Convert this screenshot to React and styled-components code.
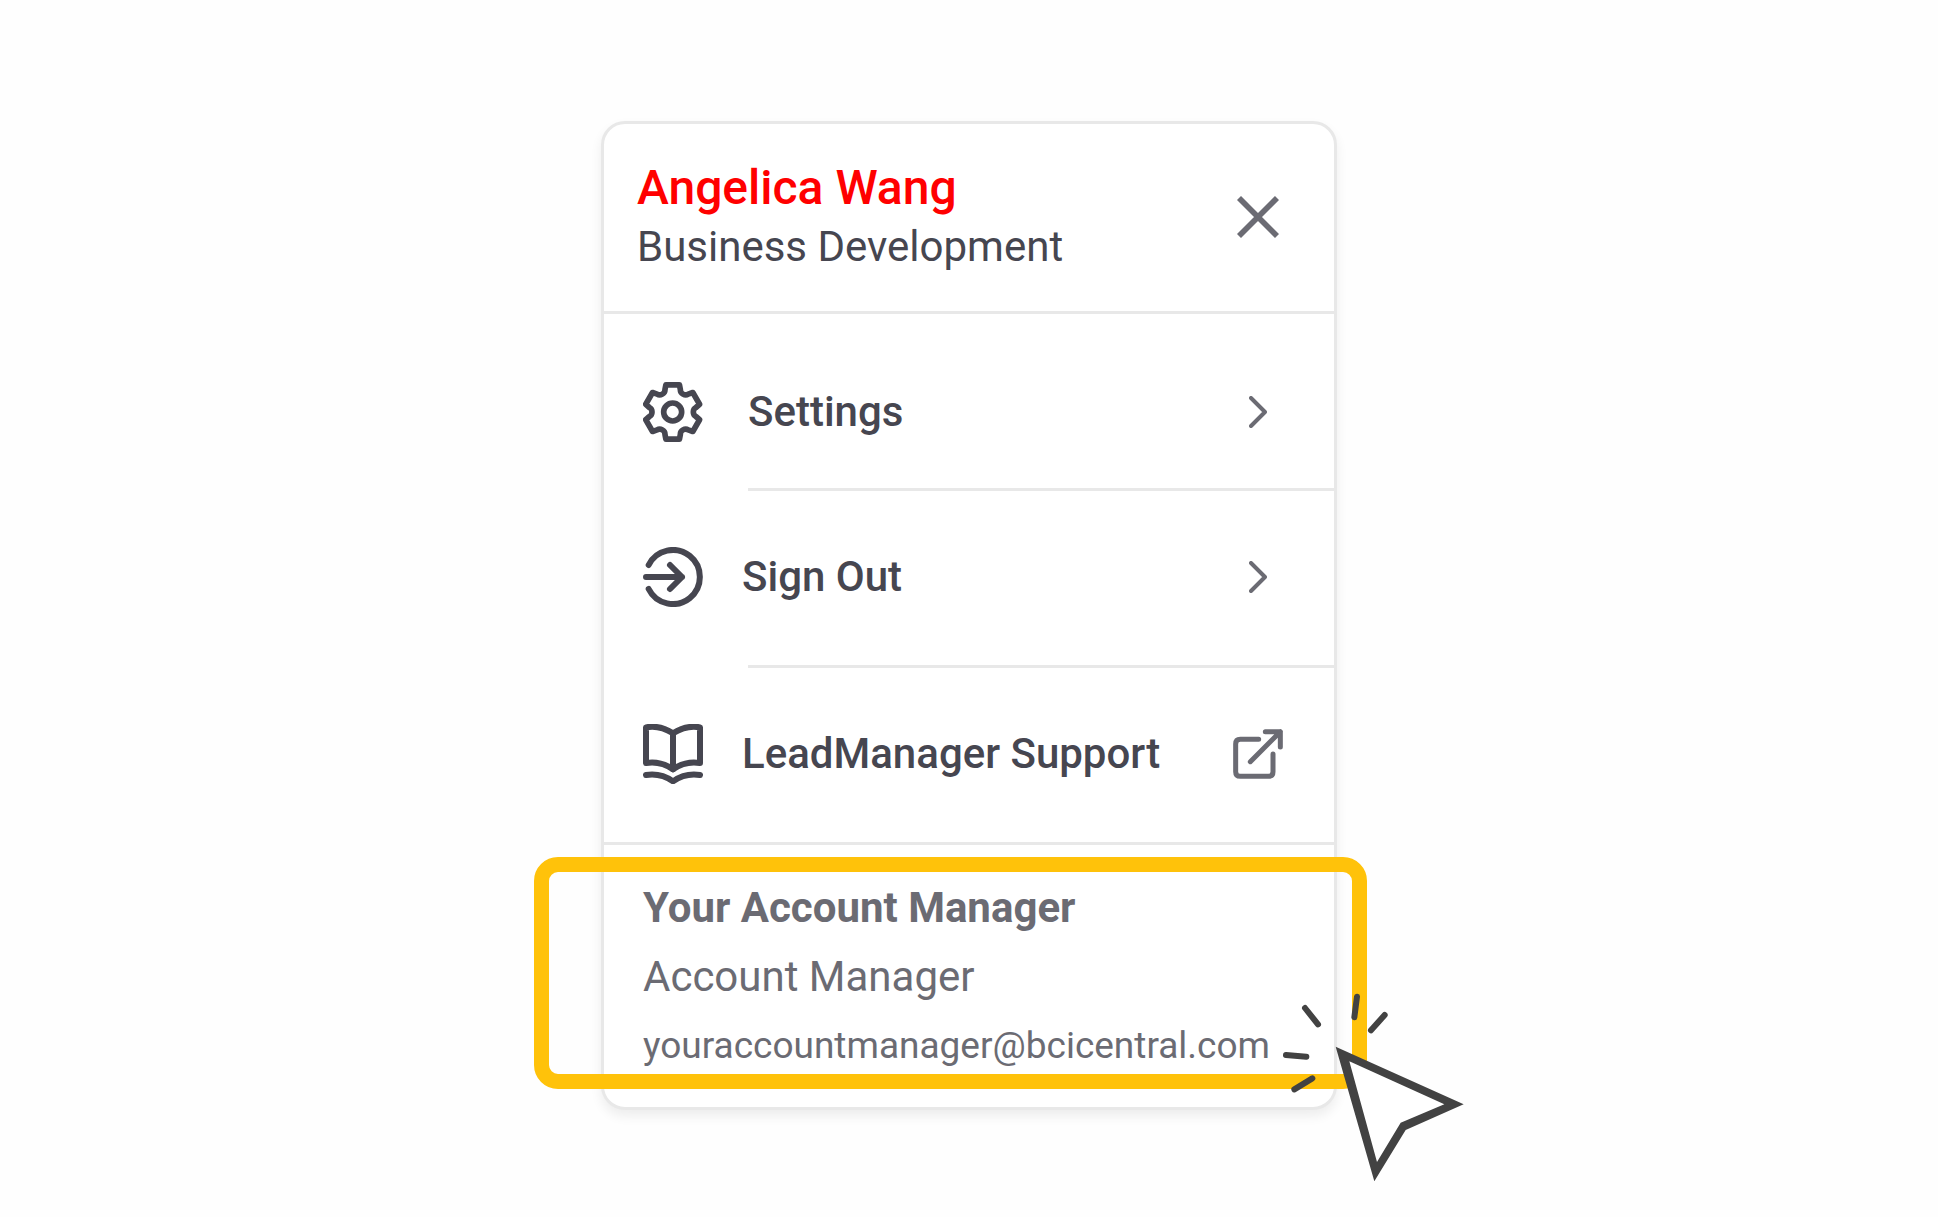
import React from "react";
import styled, { createGlobalStyle } from "styled-components";

const ink = "#464650";
const muted = "#6b6b73";
const line = "#e8e8e8";
const amber = "#ffc20a";

const GlobalStyle = createGlobalStyle`
  *, *::before, *::after { box-sizing: border-box; }
  body {
    margin: 0;
    background: #fefefe;
    color: ${ink};
    font-family: Roboto, "Liberation Sans", sans-serif;
  }
`;

const Page = styled.main`
  display: flex;
  justify-content: center;
  align-items: flex-start;
  min-height: 100vh;
  padding: 121px 24px 96px;
`;

const Card = styled.section`
  width: 100%;
  max-width: 736px;
  background: #fff;
  border: 3px solid ${line};
  border-radius: 24px;
  box-shadow: 0 6px 12px rgba(0, 0, 0, 0.07);
`;

const Header = styled.header`
  display: flex;
  align-items: center;
  justify-content: space-between;
  min-height: 187px;
  padding: 0 51px 1px 33px;
`;

const Name = styled.h1`
  margin: 0;
  font-size: 48px;
  line-height: 60px;
  font-weight: 500;
  color: #f00;
`;

const Role = styled.p`
  margin: 0;
  font-size: 42px;
  line-height: 58px;
`;

const Trailing = styled.span`
  display: flex;
  justify-content: center;
  flex: none;
  width: 50px;
  margin-left: auto;
  color: ${muted};
`;

const CloseButton = styled.button`
  display: flex;
  justify-content: center;
  flex: none;
  width: 50px;
  padding: 0;
  border: 0;
  background: none;
  color: ${muted};
  cursor: pointer;
`;

const Divider = styled.hr`
  height: 3px;
  margin: 0 0 0 ${(p) => (p.$inset ? "144px" : "0")};
  border: 0;
  background: ${line};
`;

const Row = styled.a`
  display: flex;
  align-items: center;
  gap: ${(p) => (p.$wide ? "45px" : "39px")};
  width: 100%;
  height: 174px;
  padding: ${(p) => (p.$wide ? "22px 51px 0 39px" : "0 51px 2px 39px")};
  border: 0;
  background: none;
  color: inherit;
  font: 500 42px/58px Roboto, "Liberation Sans", sans-serif;
  text-align: left;
  text-decoration: none;
  cursor: pointer;
`;

const Icon = styled.svg`
  display: block;
  flex: none;
  width: ${(p) => p.$w}px;
  height: ${(p) => p.$h || p.$w}px;
  fill: none;
  stroke: currentColor;
  stroke-linecap: round;
  stroke-linejoin: round;
`;

const Account = styled.div`
  position: relative;
  padding: 28px 39px 27px;
  color: ${muted};
  line-height: 69px;
`;

const AccountTitle = styled.h2`
  margin: 0;
  font-size: 42px;
  font-weight: 700;
  line-height: inherit;
`;

const AccountRole = styled.p`
  margin: 0;
  font-size: 42px;
`;

const Email = styled.a`
  display: block;
  color: inherit;
  font-size: 37px;
  text-decoration: none;
`;

const Highlight = styled.div`
  position: absolute;
  inset: 12px -33px 18px -70px;
  border: 15px solid ${amber};
  border-radius: 24px;
  pointer-events: none;
`;

const Pointer = styled.svg`
  position: absolute;
  top: 145px;
  right: -136px;
  width: 190px;
  height: 195px;
  pointer-events: none;
`;

/* Six-toothed outline: each tooth has a flat top and a rounded valley after it. */
const polar = (radius, degrees) => {
  const a = (degrees * Math.PI) / 180;
  return `${(90 + radius * Math.sin(a)).toFixed(1)} ${(90 - radius * Math.cos(a)).toFixed(1)}`;
};
const gearPath =
  [0, 60, 120, 180, 240, 300]
    .map(
      (t, i) =>
        `${i ? "L" : "M"}${polar(84, t - 14)}L${polar(84, t + 14)}L${polar(71, t + 19)}C${polar(60, t + 22)} ${polar(60, t + 38)} ${polar(71, t + 41)}`
    )
    .join("") + "Z";

const GearIcon = () => (
  <Icon $w={60} viewBox="1 0 180 180" strokeWidth="17" aria-hidden="true">
    <path d={gearPath} />
    <circle cx="90" cy="90" r="27" />
  </Icon>
);

const SignOutIcon = () => (
  <Icon $w={60} viewBox="69 80 180 180" strokeWidth="18" aria-hidden="true">
    <path d="M86 134A81 81 0 1 1 86 206" />
    <path d="M78 170H186M150 134L186 170L150 206" />
  </Icon>
);

const BookIcon = () => (
  <Icon $w={60} viewBox="69 70 180 180" strokeWidth="18" aria-hidden="true">
    <path d="M78 187V80Q118 72 159 98Q200 72 240 80V187Q196 180 159 206Q122 180 78 187Z" />
    <path d="M159 98V206M78 223Q122 216 159 242Q196 216 240 223" />
  </Icon>
);

const ChevronIcon = () => (
  <Icon $w={18} $h={32} viewBox="210 107 54 96" strokeWidth="12" aria-hidden="true">
    <path d="M216 113L258 155L216 197" />
  </Icon>
);

const ExternalIcon = () => (
  <Icon $w={50} viewBox="159 1105 150 150" strokeWidth="15" aria-hidden="true">
    <path d="M236 1136H181Q167 1136 167 1150V1233Q167 1247 181 1247H265Q279 1247 279 1233V1180" />
    <path d="M211 1203L301 1113M256 1113H301V1159" />
  </Icon>
);

const CloseIcon = () => (
  <Icon $w={42} viewBox="0 0 126 126" strokeWidth="17" aria-hidden="true">
    <path d="M6 6L120 120M120 6L6 120" strokeLinecap="butt" />
  </Icon>
);

const ClickPointer = () => (
  <Pointer viewBox="120 90 570 585" aria-hidden="true">
    <path d="M287 260L671 433L497 510L403 664Z" fill="#424242" />
    <path d="M328 304L613 433L482 488L411 606Z" fill="#fff" />
    <path
      d="M195 144L234 193M351 110L343 172M434 165L393 211M138 285L199 290M163 388L217 355"
      fill="none"
      stroke="#424242"
      strokeWidth="18"
      strokeLinecap="round"
    />
  </Pointer>
);

export default function App() {
  return (
    <>
      <GlobalStyle />
      <Page>
        <Card aria-label="Account menu">
          <Header>
            <div>
              <Name>Angelica Wang</Name>
              <Role>Business Development</Role>
            </div>
            <CloseButton type="button" aria-label="Close">
              <CloseIcon />
            </CloseButton>
          </Header>
          <Divider />
          <nav>
            <Row as="button" type="button" $wide>
              <GearIcon />
              Settings
              <Trailing><ChevronIcon /></Trailing>
            </Row>
            <Divider $inset />
            <Row as="button" type="button">
              <SignOutIcon />
              Sign Out
              <Trailing><ChevronIcon /></Trailing>
            </Row>
            <Divider $inset />
            <Row href="#support">
              <BookIcon />
              LeadManager Support
              <Trailing><ExternalIcon /></Trailing>
            </Row>
          </nav>
          <Divider />
          <Account>
            <AccountTitle>Your Account Manager</AccountTitle>
            <AccountRole>Account Manager</AccountRole>
            <Email href="mailto:youraccountmanager@bcicentral.com">
              youraccountmanager@bcicentral.com
            </Email>
            <Highlight />
            <ClickPointer />
          </Account>
        </Card>
      </Page>
    </>
  );
}
